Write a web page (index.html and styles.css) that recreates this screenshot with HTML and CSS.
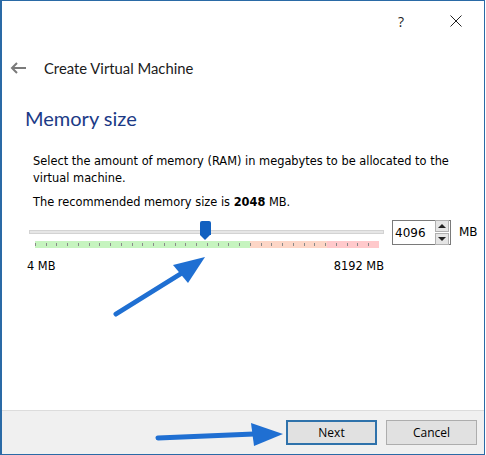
FILE: index.html
```html
<!DOCTYPE html>
<html lang="en">
<head>
  <meta charset="UTF-8" />
  <title>Create Virtual Machine</title>
  <link rel="stylesheet" href="styles.css">
</head>
<body>
  <div class="window">
    <div class="titlebar">
      <span class="help">?</span>
      <svg class="close" width="12" height="12" viewBox="0 0 12 12">
        <path d="M0.5 0.5L11.5 11.5M11.5 0.5L0.5 11.5" stroke="#222" stroke-width="1" fill="none" />
      </svg>
    </div>

    <div class="header">
      <svg class="back" width="17" height="12" viewBox="0 0 17 12">
        <path d="M16 6H2M7 1L2 6L7 11" stroke="#7a7a7a" stroke-width="2" fill="none" />
      </svg>
      <span class="header-title">Create Virtual Machine</span>
    </div>

    <div class="content">
      <h2 class="page-title">Memory size</h2>
      <div class="body">
        <p class="desc">Select the amount of memory (RAM) in megabytes to be allocated to the virtual machine.</p>
        <p class="desc">The recommended memory size is <b>2048</b> MB.</p>
      </div>

      <div class="memory-row">
        <div class="slider">
          <div class="track"></div>
          <div class="thumb"></div>
          <div class="ticks"></div>
          <div class="limits">
            <span>4 MB</span>
            <span>8192 MB</span>
          </div>
        </div>
        <div class="spinbox">
          <span class="spin-value">4096</span>
          <div class="spin-buttons">
            <div class="spin-btn"><span class="arrow-up"></span></div>
            <div class="spin-btn"><span class="arrow-down"></span></div>
          </div>
        </div>
        <span class="unit">MB</span>
      </div>
    </div>

    <div class="footer">
      <button class="btn btn-default">Next</button>
      <button class="btn">Cancel</button>
    </div>

    <svg class="annotations" width="485" height="455" viewBox="0 0 485 455">
      <path d="M116 314L190 268" stroke="#1f6fd2" stroke-width="5" stroke-linecap="round" />
      <path d="M205 257L173 265L188 283Z" fill="#1f6fd2" />
      <path d="M158 438L254 434" stroke="#1f6fd2" stroke-width="5" stroke-linecap="round" />
      <path d="M283 434L251 423L254 446Z" fill="#1f6fd2" />
    </svg>
  </div>
</body>
</html>
```

FILE: styles.css
```css
body {
  margin: 0;
  padding: 0;
  background: #ffffff;
  font-family: 'DejaVu Sans', sans-serif;
}

.window {
  position: relative;
  width: 485px;
  height: 455px;
  box-sizing: border-box;
  border: 1px solid #2a6aa6;
  border-left-width: 2px;
  display: flex;
  flex-direction: column;
  background: #ffffff;
}

.titlebar {
  height: 40px;
  display: flex;
  justify-content: flex-end;
  align-items: center;
  gap: 46px;
  padding-right: 22px;
}

.help {
  font-family: 'Open Sans', sans-serif;
  font-size: 14px;
  color: #222;
}

.header {
  height: 54px;
  display: flex;
  align-items: center;
  padding-left: 8px;
}

.back {
  margin-right: 17px;
}

.header-title {
  font-family: 'Lato', sans-serif;
  font-size: 14.8px;
  color: #1a1a1a;
}

.content {
  flex: 1;
  padding-left: 23px;
}

.page-title {
  margin: 9px 0 0;
  font-family: 'Lato', sans-serif;
  font-weight: normal;
  font-size: 20px;
  line-height: 28px;
  color: #1b3a86;
}

.body {
  padding-left: 8px;
  padding-top: 21px;
}

.desc {
  margin: 0 0 7px;
  font-size: 11.4px;
  line-height: 17px;
  color: #000;
  width: 440px;
}

.memory-row {
  display: flex;
  align-items: flex-start;
  margin-top: 9px;
  padding-left: 4px;
}

.slider {
  position: relative;
  width: 355px;
}

.track {
  margin-top: 10px;
  height: 2px;
  background: #e6e6e6;
  border: 1px solid #d3d3d3;
}

.thumb {
  position: absolute;
  left: 171px;
  top: 1px;
  width: 11px;
  height: 14px;
  background: #1160c0;
  border-radius: 2px 2px 0 0;
}

.thumb::after {
  content: "";
  position: absolute;
  left: 0;
  top: 14px;
  border-left: 5.5px solid transparent;
  border-right: 5.5px solid transparent;
  border-top: 5px solid #1160c0;
}

.ticks {
  margin: 7px 5px 0 6px;
  height: 7px;
  background:
    repeating-linear-gradient(to right, #8a8a8a 0 1px, transparent 1px 10.75px) 0 2px / 100% 3px no-repeat,
    linear-gradient(to right, #c6f4bf 0 62.5%, #fdd6c6 62.5% 85%, #ffc9cb 85%);
}

.limits {
  display: flex;
  justify-content: space-between;
  margin-top: 11px;
  font-size: 11.4px;
  color: #000;
  margin-left: -2px;
}

.spinbox {
  margin-left: 8px;
  width: 59px;
  height: 25px;
  box-sizing: border-box;
  border: 1px solid #7a7a7a;
  display: flex;
  justify-content: space-between;
  align-items: center;
  padding: 0 1px 0 2px;
}

.spin-value {
  font-size: 12px;
  color: #000;
}

.spin-buttons {
  display: flex;
  flex-direction: column;
  gap: 1px;
}

.spin-btn {
  width: 12px;
  height: 10px;
  background: #e5e5e5;
  border: 1px solid #b0b0b0;
  display: flex;
  justify-content: center;
  align-items: center;
}

.arrow-up {
  border-left: 4px solid transparent;
  border-right: 4px solid transparent;
  border-bottom: 4px solid #222;
}

.arrow-down {
  border-left: 4px solid transparent;
  border-right: 4px solid transparent;
  border-top: 4px solid #222;
}

.unit {
  margin-left: 8px;
  margin-top: 5px;
  font-size: 12px;
  color: #000;
}

.footer {
  height: 43px;
  background: #f0f0f0;
  border-top: 1px solid #dcdcdc;
  display: flex;
  justify-content: flex-end;
  align-items: center;
  gap: 9px;
  padding-right: 7px;
}

.btn {
  width: 91px;
  height: 25px;
  background: #e1e1e1;
  border: 1px solid #adadad;
  font-family: 'Open Sans', sans-serif;
  font-size: 12px;
  color: #000;
  padding: 0;
}

.btn-default {
  border: 2px solid #2f72ab;
}

.annotations {
  position: absolute;
  left: -2px;
  top: -1px;
  pointer-events: none;
}
```
